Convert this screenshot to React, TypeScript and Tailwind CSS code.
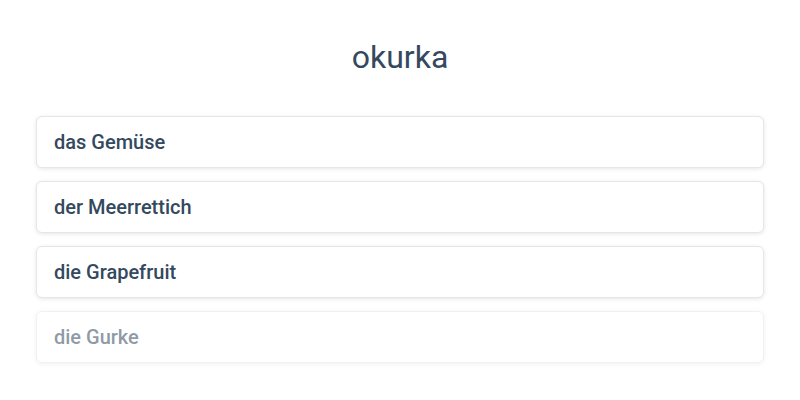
const WORDS = ['das Gemüse', 'der Meerrettich', 'die Grapefruit', 'die Gurke']

export default function App() {
  return (
    <div className="min-h-screen w-full bg-white font-['Roboto',sans-serif] text-[#34495e]">
      <h1 className="pt-[37px] text-center text-[32px] leading-[40px] font-normal text-[#34495e]">okurka</h1>

      <ul className="mt-[39px] px-[36px] flex flex-col gap-[13px]">
        {WORDS.map((w, i) => (
          <li
            key={w}
            className={`h-[52px] flex items-center px-[17px] bg-white border border-[#e6e6e6] rounded-[6px] shadow-[0_1px_4px_rgba(0,0,0,0.1)] text-[20px] font-medium ${
              i === WORDS.length - 1 ? 'opacity-[0.55]' : ''
            }`}
          >
            {w}
          </li>
        ))}
      </ul>
    </div>
  )
}
